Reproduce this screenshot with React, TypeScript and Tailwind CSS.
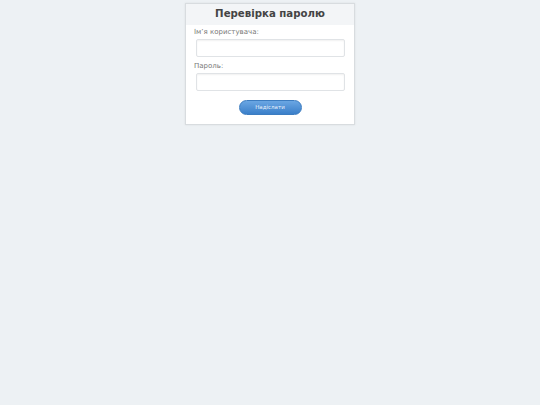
import React from 'react';

export default function App() {
  return (
    <div className="min-h-[405px] w-full bg-[#edf1f4] font-['DejaVu_Sans',sans-serif] antialiased">
      <div className="flex justify-center pt-[3px]">
        <div className="w-[170px] border border-[#d8dcdf] bg-white shadow-[0_0_2px_rgba(0,0,0,0.08)]">
          <div className="bg-[#f3f5f7] h-[21px] flex items-center justify-center">
            <h1 className="text-[10.2px] font-bold text-[#444] leading-none">Перевірка паролю</h1>
          </div>
          <form className="px-[8px] pt-[3px] pb-[9px]">
            <label className="block text-[7px] font-normal text-[#777] leading-[8px]">Імʼя користувача:</label>
            <input className="block mt-[3px] ml-[2px] w-[149px] h-[18px] border border-[#e0e3e6] rounded-[2px] shadow-[inset_0_1px_2px_rgba(0,0,0,0.06)] outline-none" />
            <label className="block text-[7px] font-normal text-[#777] leading-[8px] mt-[5px]">Пароль:</label>
            <input type="password" className="block mt-[3px] ml-[2px] w-[149px] h-[18px] border border-[#e0e3e6] rounded-[2px] shadow-[inset_0_1px_2px_rgba(0,0,0,0.06)] outline-none" />
            <div className="flex justify-center mt-[9px]">
              <button type="button" className="w-[63px] h-[15px] rounded-full bg-gradient-to-b from-[#6aa6e3] to-[#3a7fc9] border border-[#3c7cc0] text-[#e8f1fb] text-[5.5px] font-normal leading-none">
                Надіслати
              </button>
            </div>
          </form>
        </div>
      </div>
    </div>
  );
}
